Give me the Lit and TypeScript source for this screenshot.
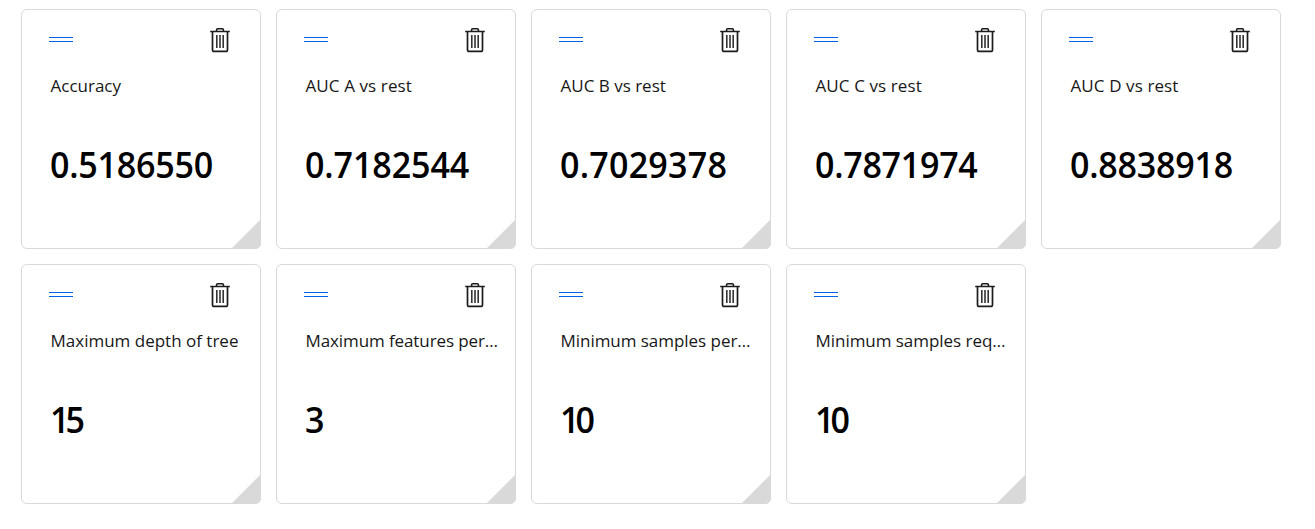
import { LitElement, html, css } from "lit";
import { customElement, property } from "lit/decorators.js";
import { styleMap } from "lit/directives/style-map.js";

interface Metric {
  label: string;
  value: string;
  labelTracking?: number;
  valueTracking?: number;
}

const METRICS: Metric[] = [
  { label: "Accuracy", value: "0.5186550", valueTracking: -0.25 },
  { label: "AUC A vs rest", value: "0.7182544", labelTracking: 0.1, valueTracking: -0.1 },
  { label: "AUC B vs rest", value: "0.7029378", valueTracking: 0.25 },
  { label: "AUC C vs rest", value: "0.7871974", labelTracking: 0.1, valueTracking: -0.3 },
  { label: "AUC D vs rest", value: "0.8838918", labelTracking: 0.1, valueTracking: -0.25 },
  { label: "Maximum depth of tree", value: "15", valueTracking: -4.2 },
  { label: "Maximum features per…", value: "3", labelTracking: -0.1 },
  { label: "Minimum samples per…", value: "10", labelTracking: -0.04, valueTracking: -4.2 },
  { label: "Minimum samples req…", value: "10", labelTracking: -0.04, valueTracking: -4.2 },
];

@customElement("metric-card")
export class MetricCard extends LitElement {
  @property({ attribute: false }) metric!: Metric;

  static styles = css`
    :host {
      display: flex;
      flex-direction: column;
      position: relative;
      box-sizing: border-box;
      height: 240px;
      padding: 17px 20px 0 27px;
      border: 1px solid #d9d9d9;
      border-radius: 6px;
      background: #fff;
    }
    .bar {
      display: flex;
      justify-content: space-between;
      height: 26px;
      padding-right: 9px;
    }
    .handle {
      box-sizing: border-box;
      width: 24px;
      height: 5px;
      margin-top: 10px;
      border: solid #0062e6;
      border-width: 1px 0;
    }
    .trash {
      display: block;
      width: 22px;
      height: 26px;
    }
    .label {
      margin: 21px 0 0 1.5px;
      font-size: 17px;
      line-height: 24px;
      color: #171717;
      white-space: nowrap;
    }
    .value {
      margin: 41px 0 0 1.4px;
      font-size: 36.3px;
      line-height: 50px;
      font-weight: 580;
      transform: scaleX(0.938);
      transform-origin: left center;
      color: #000;
      white-space: nowrap;
    }
    .grip {
      position: absolute;
      right: -1px;
      bottom: -1px;
      width: 30px;
      height: 30px;
      background: #d9d9d9;
      border-bottom-right-radius: 6px;
      clip-path: polygon(100% 0, 100% 100%, 0 100%);
    }
  `;

  render() {
    const m = this.metric;
    return html`
      <div class="bar">
        <div class="handle"></div>
        <svg class="trash" viewBox="0 0 22 26" fill="none" stroke="#1c1c1c">
          <path d="M1.2 4.5H20.8" stroke-width="1.5" />
          <path d="M7.6 4V2.8Q7.6 1.8 8.6 1.8H13.4Q14.4 1.8 14.4 2.8V4" stroke-width="1.6" />
          <path d="M3.5 4.5V22.7Q3.5 24.4 5.2 24.4H16.8Q18.5 24.4 18.5 22.7V4.5" stroke-width="1.7" />
          <path d="M7.8 8V21M11 8V21M14.2 8V21" stroke-width="1.6" stroke="#333" />
        </svg>
      </div>
      <div class="label" style=${styleMap({ letterSpacing: `${m.labelTracking ?? 0}px` })}>${m.label}</div>
      <div class="value" style=${styleMap({ letterSpacing: `${m.valueTracking ?? 0}px` })}>${m.value}</div>
      <div class="grip"></div>
    `;
  }
}

@customElement("app-root")
export class AppRoot extends LitElement {
  static styles = css`
    :host {
      display: block;
      box-sizing: border-box;
      height: 529px;
      padding: 9px 21px 0;
      background: #fff;
      font-family: "Segoe UI", "Open Sans", sans-serif;
    }
    .grid {
      display: grid;
      grid-template-columns: repeat(5, 240px);
      gap: 15px;
    }
  `;

  render() {
    return html`<div class="grid">${METRICS.map((m) => html`<metric-card .metric=${m}></metric-card>`)}</div>`;
  }
}
